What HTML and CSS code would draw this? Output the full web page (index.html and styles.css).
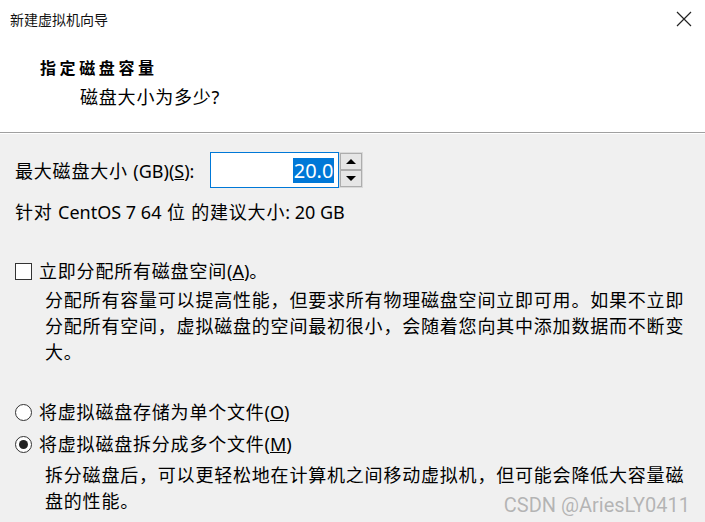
FILE: index.html
```html
<!DOCTYPE html>
<html lang="zh-CN">

<head>
   <meta charset="UTF-8">
   <meta name="viewport" content="width=device-width, initial-scale=1.0">
   <title>新建虚拟机向导</title>
   <link rel="stylesheet" href="styles.css">
</head>

<body>
   <div class="wizard">
      <div class="header">
         <div class="titlebar">
            <span class="title">新建虚拟机向导</span>
            <svg class="close" width="16" height="16" viewBox="0 0 16 16">
               <path d="M1 1 L15 15 M15 1 L1 15" stroke="#222" stroke-width="1.2" fill="none" />
            </svg>
         </div>
         <h1>指定磁盘容量</h1>
         <p class="subtitle">磁盘大小为多少?</p>
      </div>

      <div class="content">
         <div class="size-row">
            <label for="size">最大磁盘大小 <span class="en">(GB)(<u>S</u>):</span></label>
            <div class="spinbox">
               <div class="spin-input"><span class="selected">20.0</span></div>
               <div class="spin-buttons">
                  <div class="spin-btn"><span class="arrow up"></span></div>
                  <div class="spin-btn"><span class="arrow down"></span></div>
               </div>
            </div>
         </div>
         <p class="hint">针对 <span class="en">CentOS 7 64</span> 位 的建议大小<span class="en">: 20 GB</span></p>

         <div class="option">
            <span class="checkbox"></span>
            <span>立即分配所有磁盘空间<span class="en">(<u>A</u>)</span>。</span>
         </div>
         <p class="desc">分配所有容量可以提高性能，但要求所有物理磁盘空间立即可用。如果不立即分配所有空间，虚拟磁盘的空间最初很小，会随着您向其中添加数据而不断变大。</p>

         <div class="radios">
            <div class="option">
               <span class="radio"></span>
               <span>将虚拟磁盘存储为单个文件<span class="en">(<u>O</u>)</span></span>
            </div>
            <div class="option">
               <span class="radio checked"></span>
               <span>将虚拟磁盘拆分成多个文件<span class="en">(<u>M</u>)</span></span>
            </div>
         </div>
         <p class="desc split">拆分磁盘后，可以更轻松地在计算机之间移动虚拟机，但可能会降低大容量磁盘的性能。</p>
      </div>

      <div class="watermark">CSDN @AriesLY0411</div>
   </div>
</body>

</html>
```

FILE: styles.css
```css
body {
   margin: 0;
   padding: 0;
   font-family: 'Noto Sans', 'Noto Sans CJK SC', sans-serif;
   color: #000;
   background-color: #f0f0f0;
}

.wizard {
   position: relative;
   width: 705px;
   height: 522px;
   overflow: hidden;
   background-color: #f0f0f0;
}

.header {
   height: 132px;
   background-color: #fff;
   border-bottom: 1px solid #a0a0a0;
   box-shadow: 0 1px 0 #fff;
}

.titlebar {
   height: 38px;
   display: flex;
   justify-content: space-between;
   align-items: center;
   padding: 0 13px 0 10px;
}

.title {
   font-size: 14px;
   color: #111;
}

.close {
   display: block;
}

.header h1 {
   margin: 17px 0 0 40px;
   font-size: 16px;
   line-height: 26px;
   letter-spacing: 3.6px;
   font-weight: bold;
}

.subtitle {
   margin: 3px 0 0 80px;
   font-size: 18px;
   line-height: 26px;
   letter-spacing: 0.8px;
}

.content {
   padding: 19px 0 0 15px;
   font-size: 18px;
   letter-spacing: 0.8px;
}

.en {
   letter-spacing: 0;
}

.content p {
   margin: 0;
   line-height: 26px;
}

.size-row {
   display: flex;
   align-items: center;
   gap: 16px;
   height: 36px;
}

.spinbox {
   display: flex;
   height: 36px;
}

.spin-input {
   width: 123px;
   border: 1px solid #0078d7;
   background-color: #fff;
   display: flex;
   justify-content: flex-end;
   align-items: center;
   padding-right: 4px;
   letter-spacing: 0;
}

.selected {
   background-color: #0078d7;
   color: #fff;
   line-height: 25px;
   font-size: 20px;
   padding: 0 1px;
}

.spin-buttons {
   width: 22px;
   display: flex;
   flex-direction: column;
   border: 1px solid #d9d9d9;
}

.spin-btn {
   flex: 1;
   display: flex;
   justify-content: center;
   align-items: center;
   background-color: #e6e6e6;
   border: 1px solid #adadad;
}

.arrow {
   width: 0;
   height: 0;
   border-left: 5px solid transparent;
   border-right: 5px solid transparent;
}

.arrow.up {
   border-bottom: 5px solid #000;
}

.arrow.down {
   border-top: 5px solid #000;
}

.hint {
   margin-top: 11px !important;
}

.option {
   display: flex;
   align-items: center;
   gap: 7px;
   height: 26px;
   line-height: 26px;
}

.content > .option {
   margin-top: 33px;
}

.checkbox {
   width: 15px;
   height: 15px;
   border: 1px solid #333;
   background-color: #fff;
   flex-shrink: 0;
}

.radio {
   width: 15px;
   height: 15px;
   border: 1px solid #333;
   border-radius: 50%;
   background-color: #fff;
   flex-shrink: 0;
   display: flex;
   justify-content: center;
   align-items: center;
}

.radio.checked::after {
   content: '';
   width: 9px;
   height: 9px;
   border-radius: 50%;
   background-color: #222;
}

.desc {
   width: 650px;
   margin: 3px 0 0 30px !important;
}

.radios {
   margin-top: 34px;
   display: flex;
   flex-direction: column;
   gap: 6px;
}

.desc.split {
   margin-top: 5px !important;
}

.watermark {
   position: absolute;
   right: 15px;
   bottom: 5px;
   font-family: Roboto, sans-serif;
   font-size: 20px;
   color: rgba(120, 120, 120, 0.5);
}
```
